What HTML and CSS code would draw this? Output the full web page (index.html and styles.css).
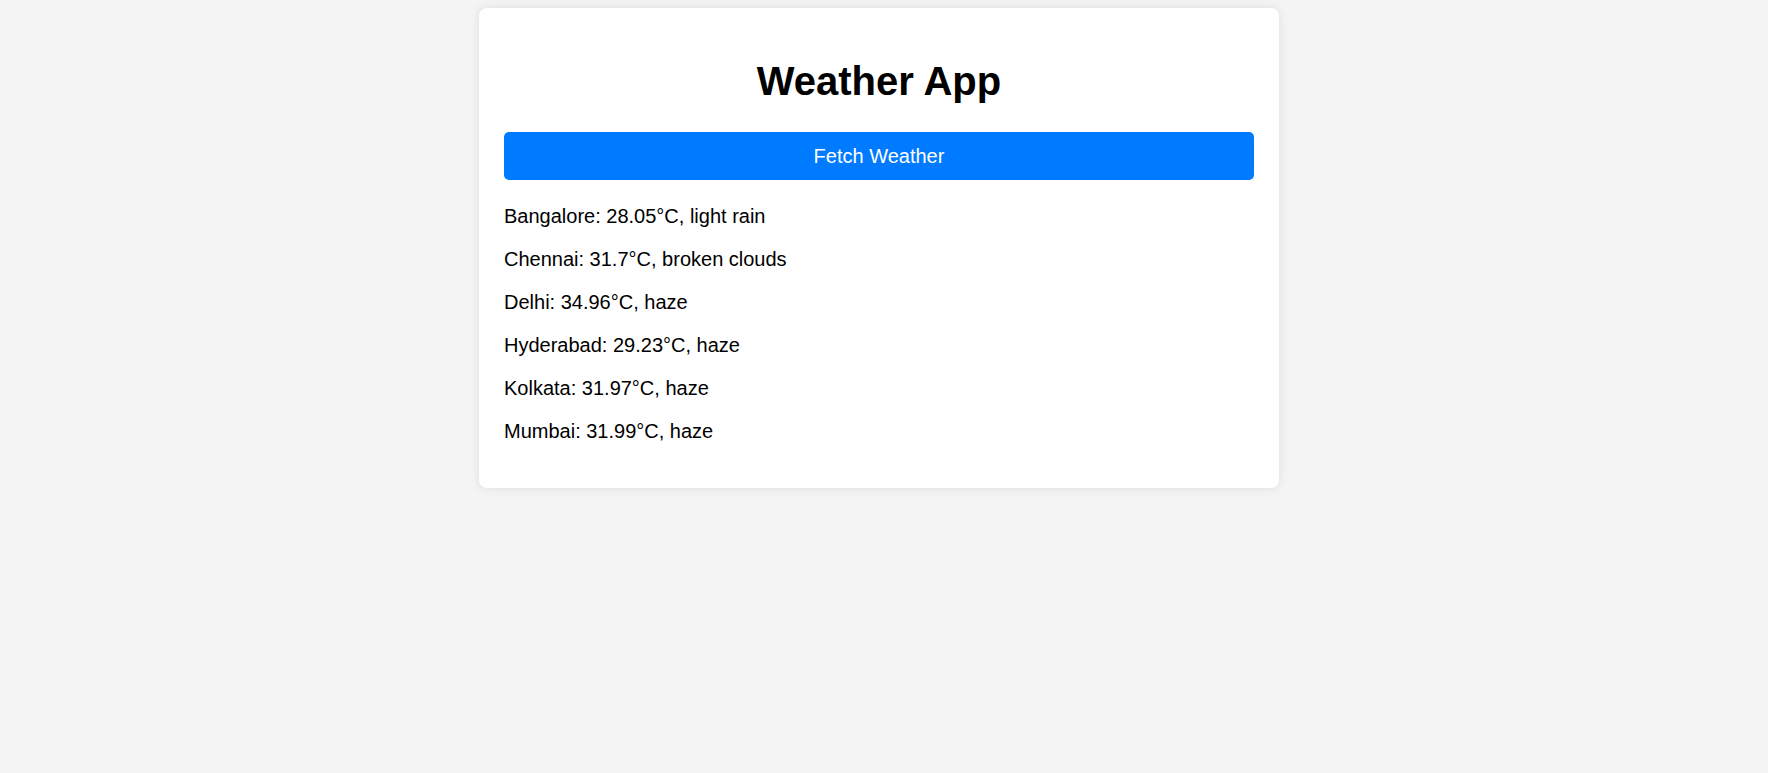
FILE: index.html
```html
<!DOCTYPE html>
<html>
<head>
<meta charset="utf-8">
<title>Weather App</title>
<link rel="stylesheet" href="styles.css">
</head>
<body>
<main class="card">
  <h1 class="title">Weather App</h1>
  <button class="fetch-btn">Fetch Weather</button>
  <div class="results">
    <p class="row">Bangalore: 28.05°C, light rain</p>
    <p class="row">Chennai: 31.7°C, broken clouds</p>
    <p class="row">Delhi: 34.96°C, haze</p>
    <p class="row">Hyderabad: 29.23°C, haze</p>
    <p class="row">Kolkata: 31.97°C, haze</p>
    <p class="row">Mumbai: 31.99°C, haze</p>
  </div>
</main>
</body>
</html>
```
FILE: styles.css
```css
html, body {
  background: #f4f4f4;
}
body {
  margin: 0;
  padding: 8px 18px 8px 8px;
  font-family: "Liberation Sans", Arial, sans-serif;
  color: #000;
}
.card {
  width: 750px;
  margin: 0 auto;
  padding: 25px 25px 25px;
  background: #fff;
  border-radius: 8px;
  box-shadow: 0 0 10px rgba(0, 0, 0, 0.1);
  display: flex;
  flex-direction: column;
}
.title {
  margin: 25px 0 28px;
  font-size: 40px;
  line-height: 46px;
  font-weight: bold;
  text-align: center;
}
.fetch-btn {
  display: block;
  width: 100%;
  padding: 12px 0;
  border: none;
  border-radius: 5px;
  background: #007bff;
  color: #fff;
  font-family: "Liberation Sans", Arial, sans-serif;
  font-size: 20px;
  line-height: 24px;
  cursor: pointer;
}
.results {
  margin: 25px 0 20px;
  display: flex;
  flex-direction: column;
  gap: 20px;
}
.row {
  margin: 0;
  font-size: 20px;
  line-height: 23px;
}
```
